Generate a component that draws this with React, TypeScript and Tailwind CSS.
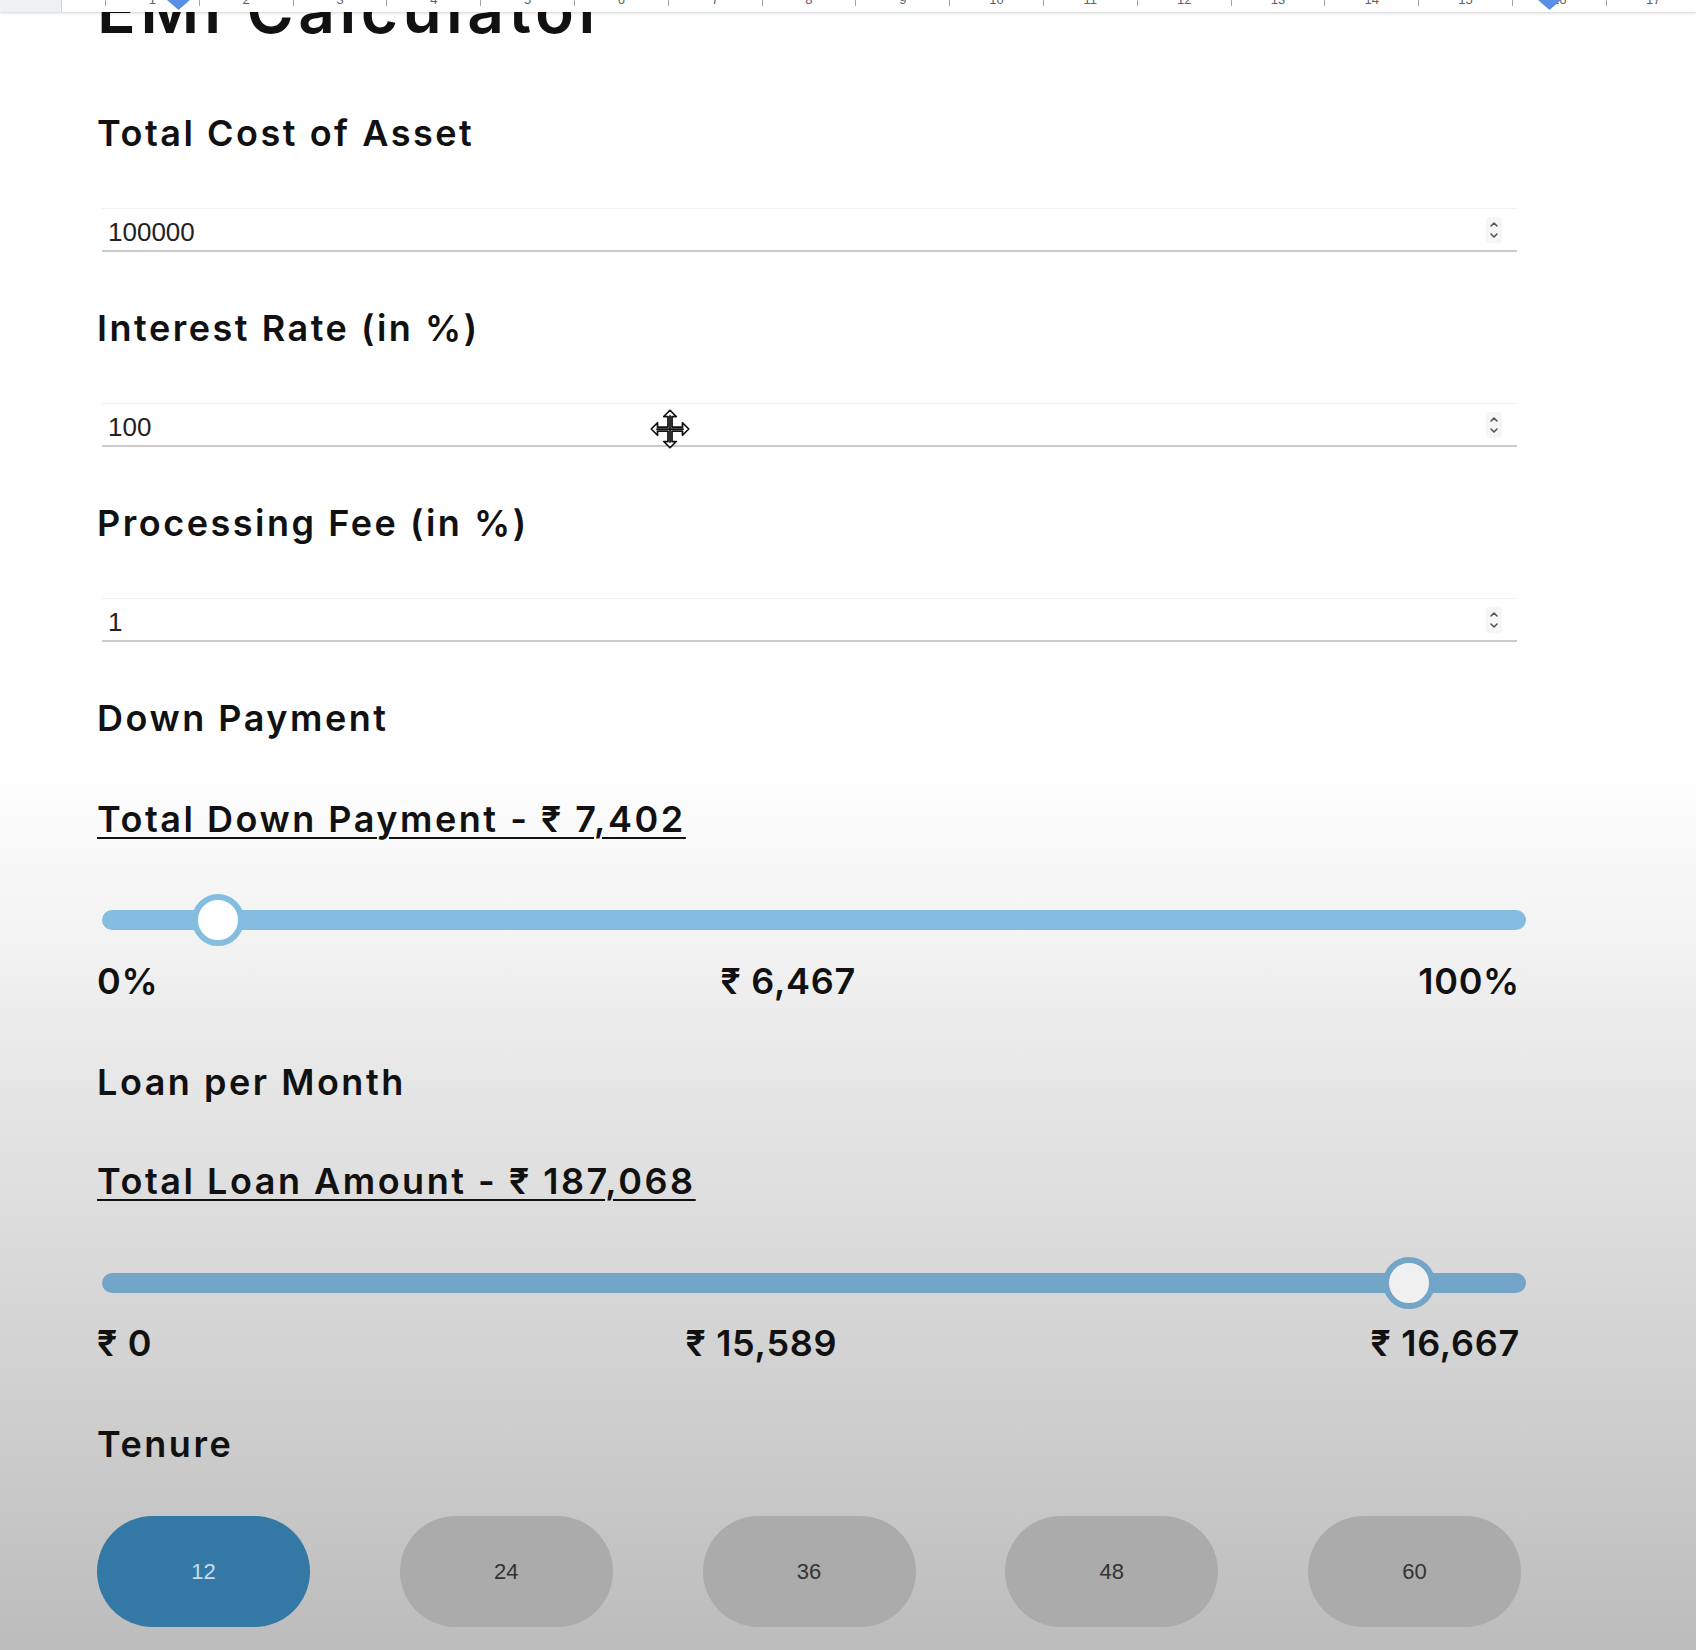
import React from "react";

const headingClass =
  "font-['Inter',sans-serif] font-semibold text-[36px] leading-none tracking-[0.07em] text-[#111]";

const rangeClass =
  "font-['Inter',sans-serif] font-semibold text-[36px] leading-none tracking-[0.02em] text-[#111]";

const rulerNumbers = Array.from({ length: 17 }, (_, i) => i + 1);

const Ruler: React.FC = () => {
  return (
    <div className="relative z-10 flex h-[12px] overflow-hidden bg-white shadow-[0_1px_3px_rgba(0,0,0,0.18)]">
      <div className="w-[62px] shrink-0 border-r border-[#d6d6d6] bg-[#eef0f2]" />
      <div className="ml-[43px] flex">
        {rulerNumbers.map((n) => (
          <div key={n} className="flex w-[93.8px] shrink-0">
            <div className="h-[6px] w-px bg-[#a0a4a8]" />
            <span className="-mt-[7px] flex-1 text-center font-['Liberation_Sans',Arial,sans-serif] text-[13px] leading-[13px] text-[#5f6368]">
              {n}
            </span>
          </div>
        ))}
      </div>
      {/* indent markers */}
      <svg className="absolute left-[167px] top-0 h-[10px] w-[23px]" viewBox="0 0 23 10">
        <path d="M0 0 H23 L11.5 10 Z" fill="#5b8fe6" />
      </svg>
      <svg className="absolute left-[1538px] top-0 h-[10px] w-[23px]" viewBox="0 0 23 10">
        <path d="M0 0 H23 L11.5 10 Z" fill="#5b8fe6" />
      </svg>
    </div>
  );
};

const Spinner: React.FC = () => (
  <div className="mr-[15px] flex h-[26px] w-[16px] items-center justify-center rounded-sm bg-[#f6f6f6]">
    <svg width="10" height="22" viewBox="0 0 10 22" fill="none" stroke="#555" strokeWidth="1.6" strokeLinecap="round" strokeLinejoin="round">
      <path d="M2 7 L5 4 L8 7" />
      <path d="M2 15 L5 18 L8 15" />
    </svg>
  </div>
);

const Field: React.FC<{ label: string; value: string; first?: boolean }> = ({ label, value, first }) => (
  <section className={first ? "mt-[61px]" : "mt-[46px]"}>
    <div className="flex h-[60px] items-center">
      <h2 className={headingClass}>{label}</h2>
    </div>
    <div className="ml-[5px] mt-[45px] flex h-[44px] w-[1415px] items-center border-t border-b-2 border-t-[#f1f1f1] border-b-[#cbcbcb]">
      <input
        readOnly
        value={value}
        className="min-w-0 flex-1 bg-transparent pl-[6px] pt-[5px] font-['Liberation_Sans',Arial,sans-serif] text-[26px] text-[#222] outline-none"
      />
      <Spinner />
    </div>
  </section>
);

const Slider: React.FC<{ offset: number; track: string; fill: string; className: string }> = ({
  offset,
  track,
  fill,
  className,
}) => (
  <div className={`relative ml-[5px] flex h-[52px] w-[1424px] items-center ${className}`}>
    <div className="h-[20px] w-full rounded-full" style={{ background: track }} />
    <div
      className="absolute top-0 h-[52px] w-[52px] rounded-full border-[6px]"
      style={{ left: offset, borderColor: track, background: fill }}
    />
  </div>
);

const RangeLabels: React.FC<{ items: string[]; className: string }> = ({ items, className }) => (
  <div className={`flex h-[40px] w-[1423px] items-center justify-between ${className}`}>
    {items.map((t) => (
      <span key={t} className={rangeClass}>
        {t}
      </span>
    ))}
  </div>
);

const MoveCursor: React.FC = () => (
  <svg className="absolute left-[650px] top-[409px] h-[40px] w-[40px]" viewBox="0 0 32 32">
    <path
      d="M16 1 L21 6 L17.6 6 L17.6 14.4 L26 14.4 L26 11 L31 16 L26 21 L26 17.6 L17.6 17.6 L17.6 26 L21 26 L16 31 L11 26 L14.4 26 L14.4 17.6 L6 17.6 L6 21 L1 16 L6 11 L6 14.4 L14.4 14.4 L14.4 6 L11 6 Z"
      fill="#fff"
      stroke="#111"
      strokeWidth="1.4"
      strokeLinejoin="round"
    />
    <path d="M16 5 V27 M5 16 H27" stroke="#111" strokeWidth="1.4" />
  </svg>
);

const tenures = [12, 24, 36, 48, 60];

export default function App() {
  const active = 12;

  return (
    <div className="relative h-[1650px] w-full overflow-hidden bg-[linear-gradient(to_bottom,#ffffff_0%,#ffffff_46%,#f4f4f4_56%,#e6e6e6_66%,#cfcfcf_85%,#bcbcbc_100%)]">
      <Ruler />

      <main className="ml-[97px] w-[1424px]">
        <h1 className="-mt-[34px] font-['Inter',sans-serif] text-[64px] font-semibold leading-none tracking-[0.07em] text-[#111]">
          EMI Calculator
        </h1>

        <Field label="Total Cost of Asset" value="100000" first />
        <Field label="Interest Rate (in %)" value="100" />
        <Field label="Processing Fee (in %)" value="1" />

        {/* Down payment */}
        <div className="mt-[46px] flex h-[60px] items-center">
          <h2 className={headingClass}>Down Payment</h2>
        </div>
        <div className="mt-[41px] flex h-[60px] items-center">
          <h3 className={`${headingClass} underline decoration-2 underline-offset-[5px]`}>
            Total Down Payment - ₹ 7,402
          </h3>
        </div>
        <Slider className="mt-[45px]" offset={90} track="#85bde0" fill="#ffffff" />
        <RangeLabels className="mt-[15px]" items={["0%", "₹ 6,467", "100%"]} />

        {/* Loan per month */}
        <div className="mt-[51px] flex h-[60px] items-center">
          <h2 className={headingClass}>Loan per Month</h2>
        </div>
        <div className="mt-[39px] flex h-[60px] items-center">
          <h3 className={`${headingClass} underline decoration-2 underline-offset-[5px]`}>
            Total Loan Amount - ₹ 187,068
          </h3>
        </div>
        <Slider className="mt-[46px]" offset={1281} track="#72a5c8" fill="#f0f0f0" />
        <RangeLabels className="mt-[14px]" items={["₹ 0", "₹ 15,589", "₹ 16,667"]} />

        {/* Tenure */}
        <div className="mt-[51px] flex h-[60px] items-center">
          <h2 className={headingClass}>Tenure</h2>
        </div>
        <div className="mt-[42px] flex w-[1424px] justify-between">
          {tenures.map((t) => (
            <button
              key={t}
              className={
                t === active
                  ? "flex h-[111px] w-[213px] items-center justify-center rounded-full bg-[#3479a5] font-['Liberation_Sans',Arial,sans-serif] text-[22px] text-[#c9dceb]"
                  : "flex h-[111px] w-[213px] items-center justify-center rounded-full bg-[#ababab] font-['Liberation_Sans',Arial,sans-serif] text-[22px] text-[#333]"
              }
            >
              {t}
            </button>
          ))}
        </div>
      </main>

      <MoveCursor />
    </div>
  );
}
